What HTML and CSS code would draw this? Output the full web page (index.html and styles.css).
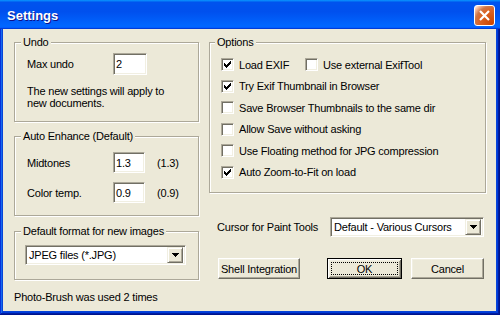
FILE: index.html
```html
<!DOCTYPE html>
<html>
<head>
<meta charset="utf-8">
<title>Settings</title>
<link rel="stylesheet" href="styles.css">
</head>
<body>
<div class="window">
  <div class="titlebar">
    <span class="title">Settings</span>
    <div class="close">
      <svg width="19" height="19" viewBox="0 0 19 19"><path d="M5 5L14 14M14 5L5 14" stroke="#fff" stroke-width="2.2" fill="none"/></svg>
    </div>
  </div>
  <div class="client">
    <div class="col-left">
      <fieldset class="group g-undo">
        <legend>Undo</legend>
        <div class="row"><span class="lbl">Max undo</span><span class="edit w34">2</span></div>
        <p class="note">The new settings will apply to<br>new documents.</p>
      </fieldset>
      <fieldset class="group g-enh">
        <legend>Auto Enhance (Default)</legend>
        <div class="row"><span class="lbl">Midtones</span><span class="edit w32">1.3</span><span class="dflt">(1.3)</span></div>
        <div class="row r2"><span class="lbl">Color temp.</span><span class="edit w32">0.9</span><span class="dflt">(0.9)</span></div>
      </fieldset>
      <fieldset class="group g-fmt">
        <legend>Default format for new images</legend>
        <div class="combo c-fmt">
          <span class="combo-text">JPEG files (*.JPG)</span>
          <span class="combo-btn"><svg width="7" height="4" viewBox="0 0 7 4" shape-rendering="crispEdges"><path d="M0 0h7v1H0zM1 1h5v1H1zM2 2h3v1H2zM3 3h1v1H3z" fill="#000"/></svg></span>
        </div>
      </fieldset>
      <div class="footer">Photo-Brush was used 2 times</div>
    </div>
    <div class="col-right">
      <fieldset class="group g-opt">
        <legend>Options</legend>
        <div class="chk-row">
          <span class="chk first"><span class="box"><svg width="7" height="7" viewBox="0 0 7 7" shape-rendering="crispEdges"><path d="M6 0h1v1H6zM5 1h2v1H5zM0 2h1v1H0zM4 2h3v1H4zM0 3h2v1H0zM3 3h3v1H3zM0 4h5v1H0zM1 5h3v1H1zM2 6h1v1H2z" fill="#000"/></svg></span>Load EXIF</span>
          <span class="chk"><span class="box"></span>Use external ExifTool</span>
        </div>
        <div class="chk-row">
          <span class="chk"><span class="box"><svg width="7" height="7" viewBox="0 0 7 7" shape-rendering="crispEdges"><path d="M6 0h1v1H6zM5 1h2v1H5zM0 2h1v1H0zM4 2h3v1H4zM0 3h2v1H0zM3 3h3v1H3zM0 4h5v1H0zM1 5h3v1H1zM2 6h1v1H2z" fill="#000"/></svg></span>Try Exif Thumbnail in Browser</span>
        </div>
        <div class="chk-row">
          <span class="chk"><span class="box"></span>Save Browser Thumbnails to the same dir</span>
        </div>
        <div class="chk-row">
          <span class="chk"><span class="box"></span>Allow Save without asking</span>
        </div>
        <div class="chk-row">
          <span class="chk"><span class="box"></span>Use Floating method for JPG compression</span>
        </div>
        <div class="chk-row">
          <span class="chk"><span class="box"><svg width="7" height="7" viewBox="0 0 7 7" shape-rendering="crispEdges"><path d="M6 0h1v1H6zM5 1h2v1H5zM0 2h1v1H0zM4 2h3v1H4zM0 3h2v1H0zM3 3h3v1H3zM0 4h5v1H0zM1 5h3v1H1zM2 6h1v1H2z" fill="#000"/></svg></span>Auto Zoom-to-Fit on load</span>
        </div>
      </fieldset>
      <div class="cursor-row">
        <span class="cursor-lbl">Cursor for Paint Tools</span>
        <div class="combo c-cur">
          <span class="combo-text">Default - Various Cursors</span>
          <span class="combo-btn"><svg width="7" height="4" viewBox="0 0 7 4" shape-rendering="crispEdges"><path d="M0 0h7v1H0zM1 1h5v1H1zM2 2h3v1H2zM3 3h1v1H3z" fill="#000"/></svg></span>
        </div>
      </div>
      <div class="btn-row">
        <div class="btn b-shell"><span>Shell Integration</span></div>
        <div class="btn b-ok default"><span class="focus">OK</span></div>
        <div class="btn b-cancel"><span>Cancel</span></div>
      </div>
    </div>
  </div>
</div>
</body>
</html>
```
FILE: styles.css
```css
* { box-sizing: border-box; }
html, body { margin: 0; padding: 0; }
body {
  width: 500px;
  height: 315px;
  overflow: hidden;
  background: #ECE9D8;
  font-family: "Liberation Sans", Arial, sans-serif;
  font-size: 11px;
  letter-spacing: -0.2px;
  color: #000;
}
.window {
  width: 500px;
  height: 315px;
  display: flex;
  flex-direction: column;
  background: #0844D8;
  box-shadow: inset -1px -1px #00138c, inset 1px 0 #0831d9, inset -2px -2px #001ea0, inset 2px 0 #166aee, inset -3px -3px #003bda;
}
.titlebar {
  height: 29px;
  flex: none;
  display: flex;
  align-items: center;
  justify-content: space-between;
  padding: 1px 5px 0 7px;
  background: linear-gradient(180deg, #0997ff, #0053ee 8%, #0050ee 40%, #0066ff 88%, #0066ff 93%, #005bff 95%, #003dd7 96%, #003dd7);
}
.title {
  color: #fff;
  font-weight: bold;
  font-size: 13px;
  letter-spacing: 0;
  text-shadow: 1px 1px #0f1089;
}
.close {
  width: 21px;
  height: 21px;
  border: 1px solid #fff;
  border-radius: 3px;
  background: radial-gradient(circle at 90% 90%, #cc4600 0%, #dc6527 55%, #cd7546 70%, #ffccb2 90%, #fff 100%);
  display: flex;
  align-items: center;
  justify-content: center;
}
.close svg { display: block; }
.client {
  flex: 1;
  margin: 0 4px 4px 3px;
  background: #ECE9D8;
  display: flex;
  gap: 10px;
  padding: 7px 10px 0 11px;
}
.col-left { width: 185px; display: flex; flex-direction: column; }
.col-right { width: 277px; display: flex; flex-direction: column; }

.group {
  margin: 0;
  min-width: 0;
  border: 1px solid #ACA899;
  box-shadow: inset 1px 1px #fff, 1px 1px #fff;
  padding: 0 12px;
}
.group legend {
  padding: 0 2px;
  margin-left: -6px;
  line-height: 13px;
  background: #ECE9D8;
}
.row { display: flex; align-items: center; height: 22px; }
.lbl { width: 86px; }
.edit {
  height: 22px;
  background: #fff;
  border: 1px solid;
  border-color: #ACA899 #fff #fff #ACA899;
  box-shadow: inset 1px 1px #716F64, inset -1px -1px #F1EFE2;
  padding-left: 2px;
  display: flex;
  align-items: center;
}
.w34 { width: 34px; }
.w32 { width: 32px; }
.dflt { margin-left: 12px; }
.g-undo { padding-top: 4px; padding-bottom: 12px; }
.note { margin: 10px 0 0; line-height: 12px; }
.g-enh { margin-top: 8px; padding-top: 9px; padding-bottom: 12px; }
.g-enh .row { height: 21px; }
.g-enh .edit { height: 21px; }
.g-enh .r2 { margin-top: 9px; }
.g-fmt { margin-top: 9px; padding-top: 7px; padding-bottom: 14px; padding-right: 13px; }
.footer { margin-top: 11px; line-height: 13px; }

.combo {
  height: 20px;
  background: #fff;
  border: 1px solid;
  border-color: #ACA899 #fff #fff #ACA899;
  box-shadow: inset 1px 1px #716F64, inset -1px -1px #F1EFE2;
  padding: 2px;
  display: flex;
  align-items: center;
}
.combo-text { flex: 1; padding-left: 1px; white-space: nowrap; }
.combo-btn {
  width: 16px;
  height: 16px;
  background: #ECE9D8;
  border: 1px solid;
  border-color: #F1EFE2 #716F64 #716F64 #F1EFE2;
  box-shadow: inset 1px 1px #fff, inset -1px -1px #ACA899;
  display: flex;
  align-items: center;
  justify-content: center;
}
.combo-btn svg { display: block; }
.c-fmt { width: 161px; margin-left: -2px; }

.g-opt { padding: 5px 11px 9px 11px; }
.chk-row { display: flex; align-items: center; height: 21.5px; }
.chk { display: flex; align-items: center; white-space: nowrap; }
.chk.first { width: 84px; }
.box {
  width: 13px;
  height: 13px;
  margin-right: 5px;
  background: #fff;
  border: 1px solid;
  border-color: #ACA899 #fff #fff #ACA899;
  box-shadow: inset 1px 1px #716F64, inset -1px -1px #F1EFE2;
  display: flex;
  align-items: center;
  justify-content: center;
}
.box svg { display: block; }

.cursor-row { display: flex; align-items: center; margin-top: 24px; padding-left: 8px; padding-right: 2px; }
.cursor-lbl { flex: 1; white-space: nowrap; }
.c-cur { width: 154px; }

.btn-row { display: flex; align-items: center; margin-top: 21px; padding-left: 9px; }
.btn {
  height: 21px;
  background: #ECE9D8;
  border: 1px solid;
  border-color: #fff #716F64 #716F64 #fff;
  box-shadow: inset -1px -1px #ACA899, inset 1px 1px #F1EFE2;
  display: flex;
  align-items: center;
  justify-content: center;
  white-space: nowrap;
}
.b-shell { width: 82px; }
.b-ok { width: 75px; margin-left: 27px; }
.b-cancel { width: 73px; margin-left: 9px; }
.btn.default {
  border: 1px solid #000;
  box-shadow: inset 1px 1px #fff, inset -1px -1px #716F64, inset 2px 2px #F1EFE2, inset -2px -2px #ACA899;
  padding: 3px;
}
.focus {
  flex: 1;
  align-self: stretch;
  border: 1px dotted #000;
  display: flex;
  align-items: center;
  justify-content: center;
}
```
